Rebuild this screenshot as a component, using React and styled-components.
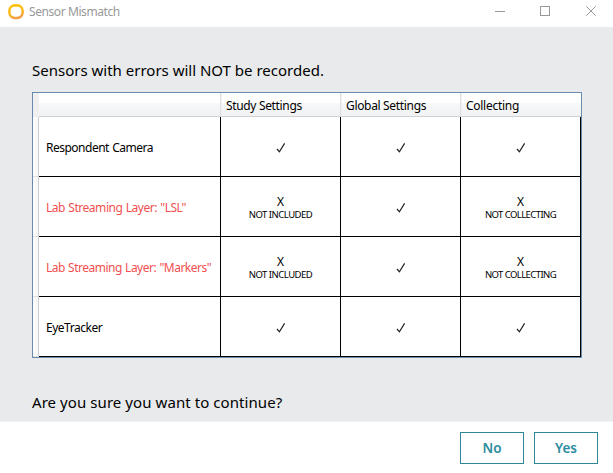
import React from "react";
import styled, { createGlobalStyle } from "styled-components";

const GlobalStyle = createGlobalStyle`
  * { box-sizing: border-box; }
  body { margin: 0; font-family: "Noto Sans", "Open Sans", sans-serif; color: #000; background: #fff; }
`;

const Dialog = styled.div`
  width: 613px;
  height: 473px;
  display: flex;
  flex-direction: column;
  background: #fff;
  overflow: hidden;
`;

const TitleBar = styled.header`
  height: 27px;
  flex: none;
  display: flex;
  align-items: flex-start;
  padding-left: 8px;
`;

const Logo = styled.svg`
  width: 16px;
  height: 16px;
  margin-top: 4px;
  flex: none;
`;

const Title = styled.h1`
  margin: 0 auto 0 5px;
  font-size: 12px;
  font-weight: 400;
  line-height: 24px;
  letter-spacing: -0.42px;
  color: #999;
`;

const WindowControls = styled.div`
  display: grid;
  grid-template-columns: 45px 46px 11px;
  padding: 6px 16px 0 0;
`;

const ControlIcon = styled.svg`
  display: block;
  width: 11px;
  height: 11px;
  fill: none;
  stroke: #999;
`;

const Body = styled.main`
  height: 395px;
  flex: none;
  padding: 31px 31px 0 32px;
  background: #e9eaeb;
  border-bottom: 1px solid #f2f2f3;
`;

const Message = styled.p`
  margin: 0;
  height: 24px;
  font-size: 15px;
  line-height: 24px;
  white-space: nowrap;
  letter-spacing: ${(p) => p.$spacing}px;
`;

const Grid = styled.div`
  width: 550px;
  margin: 10px 0 32px;
  border: 1px solid #688caf;
  background: #fff;
`;

const Row = styled.div`
  display: grid;
  grid-template-columns: 6px 182px 120px 120px 120px;
  grid-template-rows: 100%;
  height: 60px;
`;

const HeaderRow = styled(Row)`
  height: 24px;
`;

const Corner = styled.div`
  background: #f0f0f0;
`;

const HeaderCell = styled.div`
  padding: 1px 0 0 ${(p) => (p.$first ? 5 : 4)}px;
  font-size: 12px;
  line-height: 23px;
  white-space: nowrap;
  letter-spacing: ${(p) => p.$spacing || 0}px;
  background: linear-gradient(#fff 0 10px, #f7f8f9 10px, #f1f2f4 23px);
  border-left: ${(p) => (p.$first ? 0 : "1px solid #f0f1f2")};
  border-right: ${(p) => (p.$last ? 0 : "1px solid #dfe0e2")};
  border-bottom: 1px solid #d0d1d3;
`;

const RowHandle = styled.div`
  border-right: 1px solid #d0d0d0;
  border-bottom: 1px solid #e0e0e0;
  background: linear-gradient(90deg, #fff, #f7f7f7);
`;

const Cell = styled.div`
  display: flex;
  flex-direction: column;
  align-items: center;
  justify-content: center;
  border-right: 1px solid #000;
  border-bottom: 1px solid #000;
`;

const NameCell = styled(Cell)`
  align-items: flex-start;
  padding: 2px 0 0 7px;
  font-size: 12px;
  line-height: 16px;
  white-space: nowrap;
  word-spacing: 0.6px;
  letter-spacing: ${(p) => p.$spacing}px;
  color: ${(p) => (p.$error ? "#f05050" : "#000")};
`;

const CheckIcon = styled.svg`
  display: block;
  width: 10px;
  height: 10px;
  margin-top: 2px;
`;

const Cross = styled.span`
  font-size: 12px;
  line-height: 13px;
  margin-top: 3px;
`;

const Reason = styled.span`
  font-size: 9.5px;
  line-height: 13px;
  white-space: nowrap;
  letter-spacing: ${(p) => p.$spacing}px;
`;

const Footer = styled.footer`
  display: flex;
  justify-content: flex-end;
  gap: 10px;
  padding: 10px 15px 0 0;
`;

const Button = styled.button`
  width: 64px;
  height: 32px;
  padding: 0;
  border: 1px solid #2e8796;
  background: #fff;
  color: #2e8ba0;
  font: 600 13.5px/30px "Noto Sans", "Open Sans", sans-serif;
`;

const columns = [
  { label: "Study Settings", spacing: -0.34 },
  { label: "Global Settings", spacing: -0.33 },
  { label: "Collecting", spacing: -0.28 },
];

const NOT_INCLUDED = { text: "NOT INCLUDED", spacing: -0.5 };
const NOT_COLLECTING = { text: "NOT COLLECTING", spacing: -0.57 };

const sensors = [
  { name: "Respondent Camera", spacing: -0.5, states: [null, null, null] },
  { name: 'Lab Streaming Layer: "LSL"', spacing: -0.46, error: true, states: [NOT_INCLUDED, null, NOT_COLLECTING] },
  { name: 'Lab Streaming Layer: "Markers"', spacing: -0.5, error: true, states: [NOT_INCLUDED, null, NOT_COLLECTING] },
  { name: "EyeTracker", spacing: -0.48, states: [null, null, null] },
];

function Status({ problem }) {
  if (problem) {
    return (
      <Cell>
        <Cross>X</Cross>
        <Reason $spacing={problem.spacing}>{problem.text}</Reason>
      </Cell>
    );
  }
  return (
    <Cell>
      <CheckIcon viewBox="0 0 10 10" aria-label="OK">
        <path d="M1 6 L3.4 8.8 L8.6 0.4" fill="none" stroke="#222" strokeWidth="1.2" />
      </CheckIcon>
    </Cell>
  );
}

export default function App() {
  return (
    <>
      <GlobalStyle />
      <Dialog>
        <TitleBar>
          <Logo viewBox="0 0 16 16">
            <defs>
              <linearGradient id="ring" x1="0" y1="0" x2="0.3" y2="1">
                <stop offset="0" stopColor="#fcc414" />
                <stop offset="0.7" stopColor="#f9ba28" />
                <stop offset="1" stopColor="#f0a044" />
              </linearGradient>
            </defs>
            <rect x="1.4" y="1.4" width="13.2" height="12.6" rx="5.4" fill="none" stroke="url(#ring)" strokeWidth="2.6" />
          </Logo>
          <Title>Sensor Mismatch</Title>
          <WindowControls>
            <ControlIcon viewBox="0 0 11 11"><path d="M0 5.5H10" /></ControlIcon>
            <ControlIcon viewBox="0 0 11 11"><rect x="0.5" y="0.5" width="9" height="9" /></ControlIcon>
            <ControlIcon viewBox="0 0 11 11"><path d="M0.3 0.3L9.7 9.7M9.7 0.3L0.3 9.7" /></ControlIcon>
          </WindowControls>
        </TitleBar>
        <Body>
          <Message $spacing={0}>Sensors with errors will NOT be recorded.</Message>
          <Grid>
            <HeaderRow>
              <Corner />
              <HeaderCell $first />
              {columns.map((c, i) => (
                <HeaderCell key={c.label} $spacing={c.spacing} $last={i === 2}>{c.label}</HeaderCell>
              ))}
            </HeaderRow>
            {sensors.map((s) => (
              <Row key={s.name}>
                <RowHandle />
                <NameCell $error={s.error} $spacing={s.spacing}>{s.name}</NameCell>
                {s.states.map((problem, i) => (
                  <Status key={i} problem={problem} />
                ))}
              </Row>
            ))}
          </Grid>
          <Message $spacing={0.07}>Are you sure you want to continue?</Message>
        </Body>
        <Footer>
          <Button>No</Button>
          <Button>Yes</Button>
        </Footer>
      </Dialog>
    </>
  );
}
